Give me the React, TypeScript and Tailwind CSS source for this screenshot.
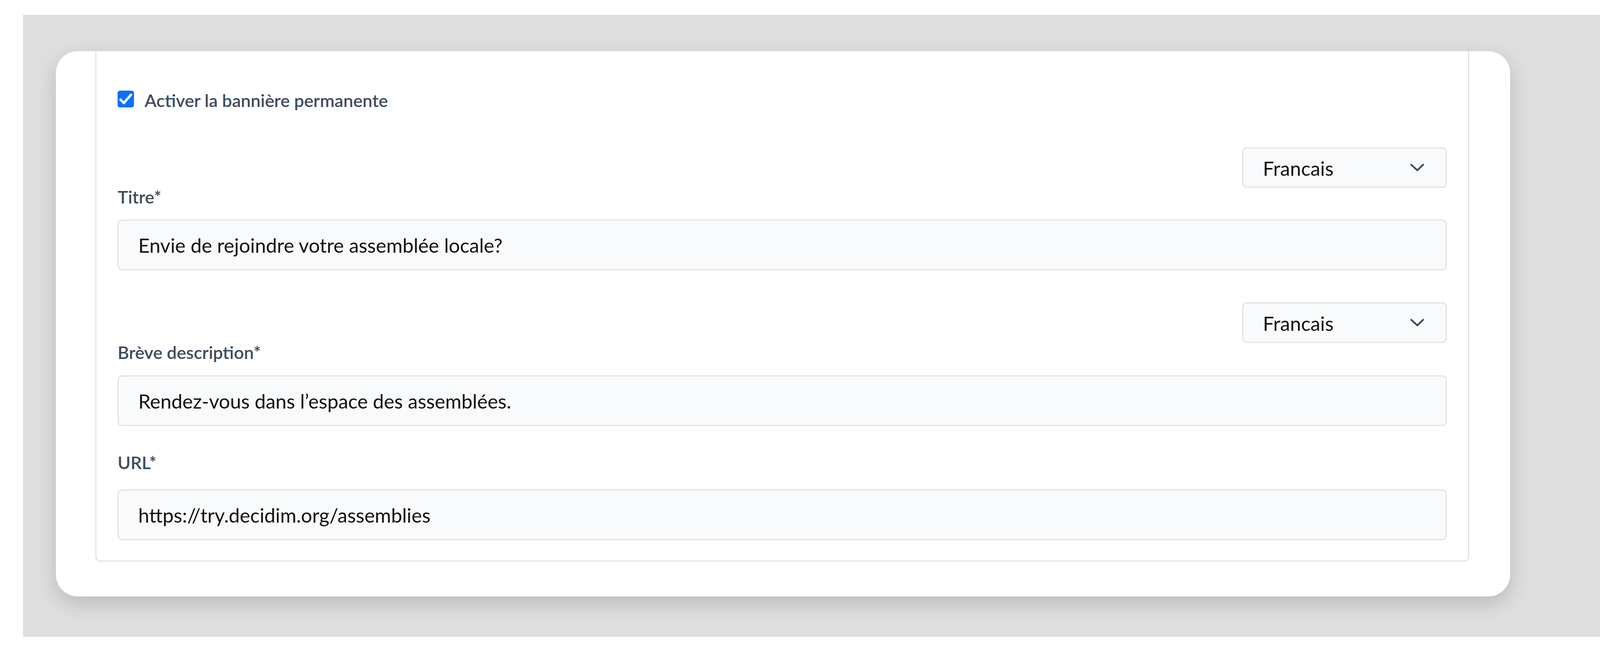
const labelClass = "block text-[45px] leading-none font-semibold text-[#3e4c5c]";
const inputClass =
  "block h-[130px] w-full rounded-[12px] border-[3px] border-[#e3e3e3] bg-[#f9fafb] pl-[50px] pr-[50px] text-[50.5px] text-[#111111] outline-none";

function LanguageSelect() {
  return (
    <div className="flex justify-end">
      <div className="flex h-[104px] w-[524px] items-center justify-between rounded-[12px] border-[3px] border-[#e3e3e3] bg-[#f9fafb] pl-[50px] pr-[53px]">
        <span className="pt-[5px] text-[50.5px] leading-none text-[#111111]">Francais</span>
        <svg width="40" height="24" viewBox="0 0 40 24" fill="none">
          <path
            d="M4.7 4.7 L20.3 19 L35.3 4.7"
            stroke="#3e4c5c"
            strokeWidth="4.5"
            strokeLinecap="round"
            strokeLinejoin="round"
          />
        </svg>
      </div>
    </div>
  );
}

function Checkbox() {
  return (
    <div className="flex h-[43px] w-[42px] shrink-0 items-center justify-center rounded-[6px] bg-[#0f6efc]">
      <svg width="42" height="43" viewBox="0 0 16 16" fill="none">
        <path
          d="M2.9 8.6 L6.1 11.9 L13 3.9"
          stroke="#ffffff"
          strokeWidth="2.3"
          strokeLinecap="round"
          strokeLinejoin="round"
        />
      </svg>
    </div>
  );
}

export default function App() {
  return (
    <div className="h-[1682px] w-full bg-white pl-[59px] pt-[38px] font-['Lato',sans-serif]">
      <div className="bg-[#dedede] pb-[103px] pl-[84px] pt-[93px]">
        <div className="w-[3723px] overflow-hidden rounded-[56px] bg-white pb-[89px] pl-[101px] pr-[105px] shadow-[0_18px_50px_rgba(0,0,0,0.16)]">
          <div className="rounded-b-[12px] border-x-[3px] border-b-[3px] border-[#e3e3e3] px-[54px] pb-[52px] pt-[101px]">
            {/* banner toggle */}
            <div className="flex h-[50px] items-start gap-[27px]">
              <Checkbox />
              <span className="mt-[3px] text-[45px] leading-none font-semibold text-[#3e4c5c]">
                Activer la bannière permanente
              </span>
            </div>

            <div className="mt-[95px]">
              <LanguageSelect />
            </div>
            <label className={`${labelClass} mt-[1px]`}>Titre*</label>
            <input
              className={`${inputClass} mt-[35px]`}
              readOnly
              value="Envie de rejoindre votre assemblée locale?"
            />

            <div className="mt-[82px]">
              <LanguageSelect />
            </div>
            <label className={`${labelClass} mt-[2px]`}>Brève description*</label>
            <input
              className={`${inputClass} mt-[36px]`}
              readOnly
              value="Rendez-vous dans l’espace des assemblées."
            />

            <label className={`${labelClass} mt-[71px]`}>URL*</label>
            <input
              className={`${inputClass} mt-[46px]`}
              readOnly
              value="https://try.decidim.org/assemblies"
            />
          </div>
        </div>
      </div>
    </div>
  );
}
